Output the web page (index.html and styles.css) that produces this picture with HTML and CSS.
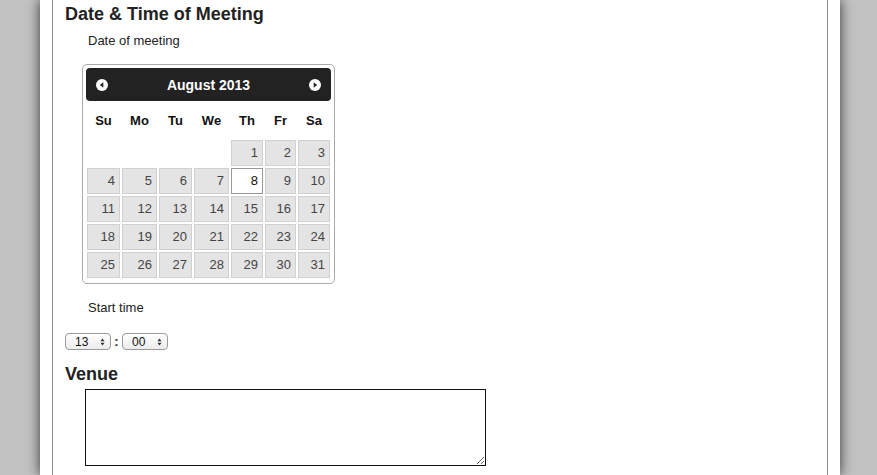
FILE: index.html
```html
<!DOCTYPE html>
<html>
<head>
<meta charset="utf-8">
<title>Meeting</title>
<link rel="stylesheet" href="styles.css">
</head>
<body>
<div class="page">
  <div class="frame">
    <h2 class="section-title first">Date &amp; Time of Meeting</h2>
    <div class="label">Date of meeting</div>
    <div class="calendar">
      <div class="cal-head">
        <span class="nav-icon">
          <svg width="12" height="12" viewBox="0 0 12 12"><circle cx="6" cy="6" r="6" fill="#fff"/><path d="M7.3 3.2 L3.9 6 L7.3 8.8 Z" fill="#222"/></svg>
        </span>
        <span class="cal-title">August 2013</span>
        <span class="nav-icon">
          <svg width="12" height="12" viewBox="0 0 12 12"><circle cx="6" cy="6" r="6" fill="#fff"/><path d="M4.7 3.2 L8.1 6 L4.7 8.8 Z" fill="#222"/></svg>
        </span>
      </div>
      <div class="weekdays">
        <span>Su</span><span>Mo</span><span>Tu</span><span>We</span><span>Th</span><span>Fr</span><span>Sa</span>
      </div>
      <div class="days">
        <span class="empty"></span><span class="empty"></span><span class="empty"></span><span class="empty"></span>
        <span class="day">1</span><span class="day">2</span><span class="day">3</span>
        <span class="day">4</span><span class="day">5</span><span class="day">6</span><span class="day">7</span><span class="day active">8</span><span class="day">9</span><span class="day">10</span>
        <span class="day">11</span><span class="day">12</span><span class="day">13</span><span class="day">14</span><span class="day">15</span><span class="day">16</span><span class="day">17</span>
        <span class="day">18</span><span class="day">19</span><span class="day">20</span><span class="day">21</span><span class="day">22</span><span class="day">23</span><span class="day">24</span>
        <span class="day">25</span><span class="day">26</span><span class="day">27</span><span class="day">28</span><span class="day">29</span><span class="day">30</span><span class="day">31</span>
      </div>
    </div>
    <div class="label label-time">Start time</div>
    <div class="time-row">
      <span class="select sel-hour"><span class="sel-val">13</span>
        <svg class="arrows" width="5" height="8" viewBox="0 0 5 8"><path d="M2.5 0.5 L4.6 3.2 L0.4 3.2 Z M2.5 7.5 L4.6 4.8 L0.4 4.8 Z" fill="#333"/></svg>
      </span>
      <span class="colon">:</span>
      <span class="select sel-min"><span class="sel-val">00</span>
        <svg class="arrows" width="5" height="8" viewBox="0 0 5 8"><path d="M2.5 0.5 L4.6 3.2 L0.4 3.2 Z M2.5 7.5 L4.6 4.8 L0.4 4.8 Z" fill="#333"/></svg>
      </span>
    </div>
    <h2 class="section-title venue">Venue</h2>
    <textarea class="venue-input"></textarea>
  </div>
</div>
</body>
</html>
```

FILE: styles.css
```css
html, body {
  margin: 0;
  padding: 0;
}
body {
  background: #c2c2c2;
  font-family: "Liberation Sans", Arial, sans-serif;
  color: #222;
  height: 475px;
  overflow: hidden;
}
.page {
  width: 800px;
  margin-left: 40px;
  background: #fff;
  min-height: 475px;
  box-shadow: 0 0 12px rgba(0, 0, 0, 0.75);
  display: flex;
}
.frame {
  flex: 1;
  margin: 0 12px;
  border-left: 1px solid #8a8a8a;
  border-right: 1px solid #8a8a8a;
  padding: 3px 12px 0 12px;
  min-height: 472px;
}
.section-title {
  margin: 0;
  font-size: 18px;
  line-height: 22px;
  font-weight: bold;
  color: #222;
}
.label {
  font-size: 13px;
  line-height: 16px;
  margin: 8px 0 0 23px;
  color: #222;
}
.calendar {
  width: 245px;
  margin: 15px 0 0 17px;
  border: 1px solid #aaa;
  border-radius: 5px;
  padding: 3px 3px 5px 3px;
}
.cal-head {
  height: 33px;
  background: #222;
  border-radius: 4px;
  display: flex;
  align-items: center;
  justify-content: space-between;
  padding: 0 10px;
}
.nav-icon {
  display: flex;
  width: 12px;
  height: 12px;
}
.cal-title {
  color: #fff;
  font-weight: bold;
  font-size: 14px;
}
.weekdays,
.days {
  display: grid;
  grid-template-columns: 33px 35px 33px 35px 32px 31px 32px;
  column-gap: 2px;
  margin: 0 1px;
}
.weekdays {
  padding: 12px 0 11px 0;
  font-size: 13px;
  line-height: 16px;
  font-weight: bold;
  color: #111;
  text-align: center;
}
.days {
  grid-auto-rows: 26px;
  row-gap: 2px;
}
.day {
  border: 1px solid #d0d0d0;
  background: #e4e4e4;
  color: #444;
  font-size: 13px;
  line-height: 24px;
  text-align: right;
  padding-right: 4px;
}
.day.active {
  background: #fff;
  border-color: #999;
  color: #111;
}
.label-time {
  margin-top: 16px;
}
.time-row {
  display: flex;
  align-items: center;
  margin-top: 17px;
  height: 17px;
}
.select {
  display: flex;
  align-items: center;
  height: 15px;
  border: 1px solid #9a9a9a;
  border-radius: 4px;
  background: linear-gradient(#ffffff, #ececec);
  font-size: 12px;
  color: #111;
  box-sizing: content-box;
}
.sel-hour {
  width: 44px;
}
.sel-min {
  width: 44px;
}
.sel-val {
  margin-left: 9px;
  flex: 1;
}
.arrows {
  margin-right: 5px;
}
.colon {
  font-size: 13px;
  font-weight: bold;
  width: 11px;
  text-align: center;
  color: #222;
}
.venue {
  margin-top: 13px;
}
.venue-input {
  display: block;
  margin: 4px 0 0 20px;
  width: 399px;
  height: 75px;
  border: 1px solid #111;
  padding: 0;
  box-sizing: content-box;
  background: #fff;
  font-family: "Liberation Sans", Arial, sans-serif;
}
```
